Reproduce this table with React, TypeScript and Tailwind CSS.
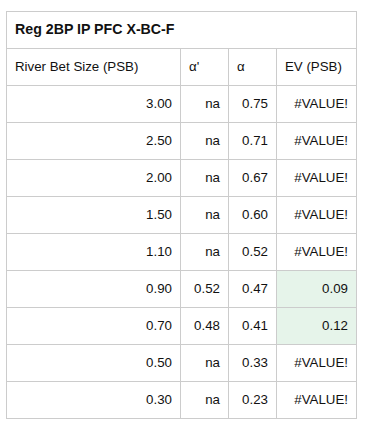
import { Fragment } from "react";

const rows: [string, string, string, string, boolean][] = [
  ["3.00", "na", "0.75", "#VALUE!", false],
  ["2.50", "na", "0.71", "#VALUE!", false],
  ["2.00", "na", "0.67", "#VALUE!", false],
  ["1.50", "na", "0.60", "#VALUE!", false],
  ["1.10", "na", "0.52", "#VALUE!", false],
  ["0.90", "0.52", "0.47", "0.09", true],
  ["0.70", "0.48", "0.41", "0.12", true],
  ["0.50", "na", "0.33", "#VALUE!", false],
  ["0.30", "na", "0.23", "#VALUE!", false],
];

const cell = "h-[37px] border-r border-b border-[#cccccc] flex items-center px-2";

export default function App() {
  return (
    <div className="w-[367px] h-[428px] bg-white pt-[11px] pl-[6px] text-[13.3px] text-[#111111] font-['Liberation_Sans',Arial,sans-serif]">
      <div className="grid grid-cols-[174px_48px_48px_80px] border-t border-l border-[#cccccc] w-fit">
        {/* Title */}
        <div className={`${cell} col-span-4 font-bold text-[14.2px]`}>Reg 2BP IP PFC X-BC-F</div>

        {/* Header */}
        <div className={cell}>River Bet Size (PSB)</div>
        <div className={cell}>α'</div>
        <div className={cell}>α</div>
        <div className={cell}>EV (PSB)</div>

        {rows.map(([size, ap, a, ev, hi]) => (
          <Fragment key={size}>
            <div className={`${cell} justify-end`}>{size}</div>
            <div className={`${cell} justify-end`}>{ap}</div>
            <div className={`${cell} justify-end`}>{a}</div>
            <div className={`${cell} justify-end ${hi ? "bg-[#e6f4ea]" : ""}`}>{ev}</div>
          </Fragment>
        ))}
      </div>
    </div>
  );
}
